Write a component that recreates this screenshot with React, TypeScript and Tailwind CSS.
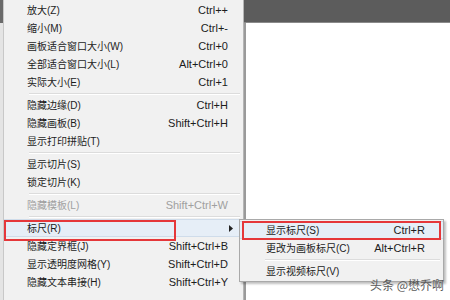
import { ReactNode } from 'react';

type Item = {
  label?: string;
  shortcut?: string;
  disabled?: boolean;
  active?: boolean;
  submenu?: boolean;
  sep?: boolean;
};

const mainItems: Item[] = [
  { label: '放大(Z)', shortcut: 'Ctrl++' },
  { label: '缩小(M)', shortcut: 'Ctrl+-' },
  { label: '画板适合窗口大小(W)', shortcut: 'Ctrl+0' },
  { label: '全部适合窗口大小(L)', shortcut: 'Alt+Ctrl+0' },
  { label: '实际大小(E)', shortcut: 'Ctrl+1' },
  { sep: true },
  { label: '隐藏边缘(D)', shortcut: 'Ctrl+H' },
  { label: '隐藏画板(B)', shortcut: 'Shift+Ctrl+H' },
  { label: '显示打印拼贴(T)' },
  { sep: true },
  { label: '显示切片(S)' },
  { label: '锁定切片(K)' },
  { sep: true },
  { label: '隐藏模板(L)', shortcut: 'Shift+Ctrl+W', disabled: true },
  { sep: true },
  { label: '标尺(R)', active: true, submenu: true },
  { label: '隐藏定界框(J)', shortcut: 'Shift+Ctrl+B' },
  { label: '显示透明度网格(Y)', shortcut: 'Shift+Ctrl+D' },
  { label: '隐藏文本串接(H)', shortcut: 'Shift+Ctrl+Y' },
];

const subItems: Item[] = [
  { label: '显示标尺(S)', shortcut: 'Ctrl+R', active: true },
  { label: '更改为画板标尺(C)', shortcut: 'Alt+Ctrl+R' },
  { sep: true },
  { label: '显示视频标尺(V)' },
];

const Separator = () => (
  <div className="h-[5px] flex items-center pl-[25px] pr-[3px]">
    <div className="w-full border-t border-[#dcdcdc] border-b border-b-white" />
  </div>
);

const Row = ({ item, pl, pr }: { item: Item; pl: string; pr: string }) => {
  const color = item.disabled ? 'text-[#a0a0a0]' : 'text-[#1c1c1c]';
  let inner: ReactNode = (
    <>
      <span className={`${pl} text-[10px]`}>{item.label}</span>
      {item.shortcut && <span className={`ml-auto ${pr} text-[11px]`}>{item.shortcut}</span>}
      {item.submenu && (
        <svg className="ml-auto mr-[10px]" width="4" height="7" viewBox="0 0 4 7">
          <path d="M0 0 L4 3.5 L0 7 Z" fill="#222" />
        </svg>
      )}
    </>
  );
  return (
    <div
      className={`h-[18px] flex items-center ${color} ${
        item.active ? 'bg-[#e6eef7] border-y border-[#cfdcea]' : ''
      }`}
    >
      {inner}
    </div>
  );
};

export default function App() {
  return (
    <div
      className="relative w-[450px] h-[300px] overflow-hidden bg-white flex"
      style={{ fontFamily: '"Liberation Sans", "Noto Sans CJK SC", sans-serif' }}
    >
      {/* main menu */}
      <div className="w-[244px] h-full flex">
        <div className="w-[3px] h-full flex flex-col">
          <div className="h-[23px] bg-[#6a6a6a]" />
          <div className="flex-1 bg-[#e4e4e4]" />
        </div>
        <div className="flex-1 h-full bg-[#f1f1f1] border-l border-[#c8c8c8] border-r border-r-[#b5b5b5] pt-[1px] flex flex-col">
          {mainItems.map((it, i) =>
            it.sep ? <Separator key={i} /> : <Row key={i} item={it} pl="pl-[23px]" pr="pr-[15px]" />
          )}
        </div>
      </div>

      {/* right side */}
      <div className="flex-1 h-full flex flex-col">
        <div className="h-[23px] bg-[#5c5c5c] border-b border-[#8a8a8a]" />
        <div className="flex-1 bg-white border-l-2 border-[#9a9a9a]" />
      </div>

      {/* highlight box on 标尺 */}
      <div className="absolute left-[4px] top-[220px] w-[172px] h-[21px] border-2 border-[#e5373a]" />

      {/* submenu */}
      <div className="absolute left-[239px] top-[219px] w-[205px] h-[63px] bg-[#f1f1f1] border border-[#a9a9a9] shadow-[2px_2px_2px_rgba(0,0,0,0.25)] pt-[1px] flex flex-col">
        {subItems.map((it, i) =>
          it.sep ? <Separator key={i} /> : <Row key={i} item={it} pl="pl-[26px]" pr="pr-[18px]" />
        )}
      </div>
      <div className="absolute left-[242px] top-[221px] w-[199px] h-[19px] border-2 border-[#e5373a]" />

      {/* watermark */}
      <div
        className="absolute left-[370px] top-[276px] text-[12px] text-[#5a5a5a]"
        style={{ fontFamily: '"Noto Sans CJK SC", sans-serif' }}
      >
        头条 @懋乔啊
      </div>
    </div>
  );
}
